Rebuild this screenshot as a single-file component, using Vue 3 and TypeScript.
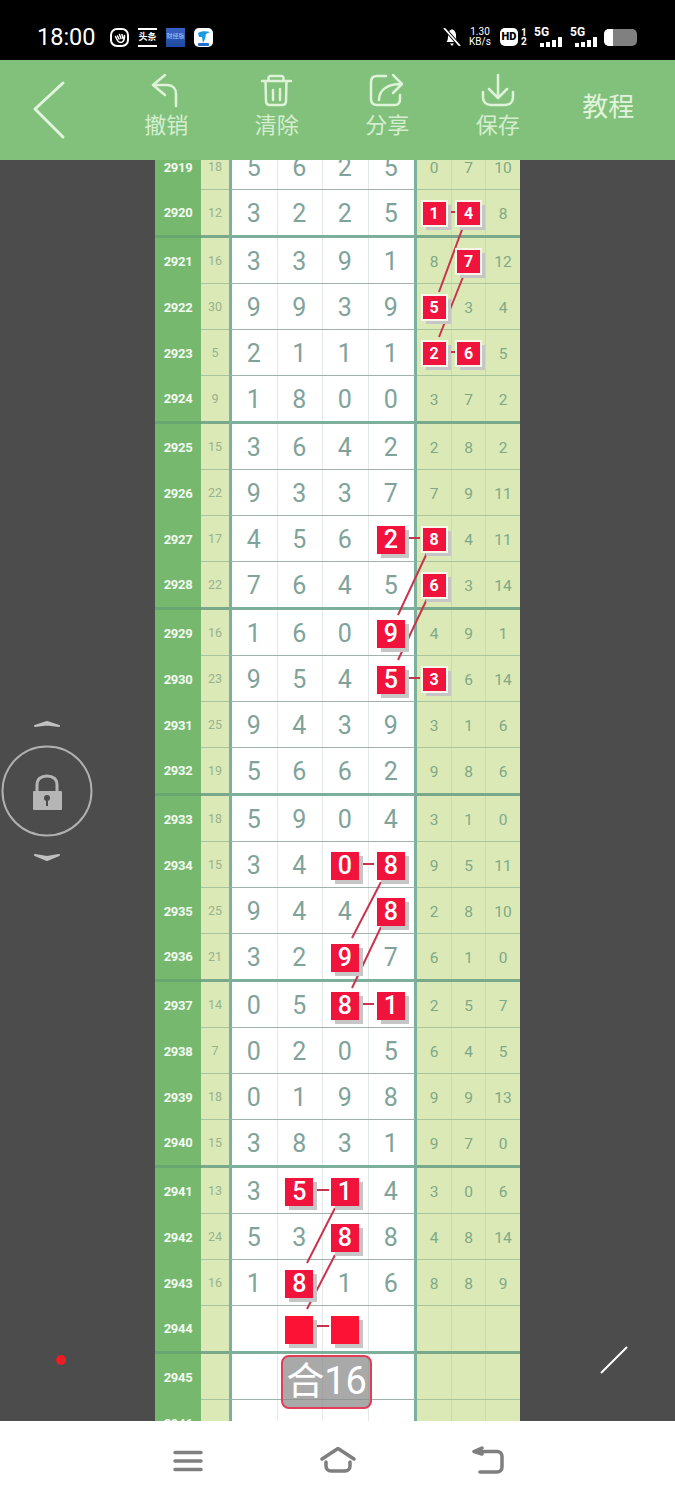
<template>
  <div class="page">
    <div class="status">
      <span class="status__time">18:00</span>
      <div class="status__apps">
        <svg class="app" viewBox="0 0 19 19">
          <rect x="1" y="1" width="17" height="17" rx="6" fill="#000" stroke="#fff" stroke-width="2" />
          <path d="M5.5 8.5l2 4c1 2 4 2.5 5.5 1s1.500-3.500 1.500-6M7.500 8l1.500 3M9.500 6.500l1.500 4M12 6.500l1 4" fill="none" stroke="#fff" stroke-width="1.500" stroke-linecap="round" />
        </svg>
        <div class="app app--news">头条</div>
        <div class="app app--blue">财经版</div>
        <svg class="app" viewBox="0 0 19 19">
          <rect width="19" height="19" rx="5" fill="#fff" />
          <path d="M4 5c3-2 8-2 12-1l-4 2-1 5-2 4-1-6-3 0z" fill="#1b9ce0" />
          <rect x="4" y="15" width="11" height="3" rx="1" fill="#1f6fd0" />
        </svg>
      </div>
      <div class="status__right">
        <svg class="bell" viewBox="0 0 18 18">
          <path d="M3.500 14c1.500-2 1.500-4 1.500-7s2-5.500 4-5.500S13 4 13 7s0 5 1.500 7zM7 15.500h4L9 18z" fill="#fff" />
          <path d="M1 0l16 18" stroke="#000" stroke-width="3.500" />
          <path d="M1 0l16 18" stroke="#fff" stroke-width="1.800" />
        </svg>
        <div class="speed"><span>1.30</span><span>KB/s</span></div>
        <div class="hd">HD</div>
        <div class="sim"><span>1</span><span>2</span></div>
        <div v-for="n in 2" :key="n" class="net">
          <span>5G</span>
          <svg viewBox="0 0 22 10" width="22" height="10">
            <rect x="0" y="6" width="4" height="4" fill="#fff" />
            <rect x="6" y="5" width="4" height="5" fill="#fff" />
            <rect x="12" y="3" width="4" height="7" fill="#fff" />
            <rect x="18" y="0" width="4" height="10" fill="#fff" />
          </svg>
        </div>
        <div class="battery"><div class="battery__fill"></div></div>
      </div>
    </div>

    <header class="bar">
      <svg class="bar__back" viewBox="0 0 40 70" width="40" height="70">
        <path d="M31 4L3 30l28 28" fill="none" stroke="#e0f5dc" stroke-width="3" stroke-linecap="round" stroke-linejoin="round" />
      </svg>
      <div class="bar__item">
        <svg viewBox="0 0 36 36" width="36" height="36">
          <path d="M17 2L5 12l12 10M5 12h14c6 0 9 4 9 9v12" class="bar__icon" />
        </svg>
        <span>撤销</span>
      </div>
      <div class="bar__item">
        <svg viewBox="0 0 36 36" width="36" height="36">
          <path d="M3 8h29M9.500 8V5c0-1 1-2 2-2h11c1 0 2 1 2 2v3M6.500 8l.5 20c0 3 2 4 4 4h12c2 0 4-1 4-4l.5-20M14 17v10M21 16v11" class="bar__icon" />
        </svg>
        <span>清除</span>
      </div>
      <div class="bar__item">
        <svg viewBox="0 0 36 36" width="36" height="36">
          <path d="M17 3H8C4 3 2 5 2 9v17c0 4 2 6 6 6h18c3 0 5-2 5-6v-4" class="bar__icon" />
          <path d="M10 27c0-9 7-16 22-16M24 2l9 9-9 9" class="bar__icon" />
        </svg>
        <span>分享</span>
      </div>
      <div class="bar__item">
        <svg viewBox="0 0 36 36" width="36" height="36">
          <path d="M18 2v23M9 16l9 9 9-9M3 19v5c0 5 3 8 8 8h14c5 0 8-3 8-8v-5" class="bar__icon" />
        </svg>
        <span>保存</span>
      </div>
      <div class="bar__item bar__item--text">教程</div>
    </header>

    <main class="board">
      <div class="chart">
        <div class="chart__rows">
          <div
            v-for="row in rows"
            :key="row.no"
            class="row"
            :class="{ 'row--end': row.end }"
          >
            <div class="row__no">{{ row.no }}</div>
            <div class="row__sum">{{ row.sum }}</div>
            <div class="row__digits">
              <div v-for="(d, i) in row.digits" :key="i" class="cell">
                <span v-if="d.hit" class="hit">{{ d.v }}</span>
                <span v-else>{{ d.v }}</span>
              </div>
            </div>
            <div class="row__side">
              <div v-for="(d, i) in row.side" :key="i" class="side">
                <span v-if="d.hit" class="hit hit--small">{{ d.v }}</span>
                <span v-else>{{ d.v }}</span>
              </div>
            </div>
          </div>
        </div>
        <svg class="chart__lines" viewBox="155 160 365 1261">
          <line
            v-for="(l, i) in lines"
            :key="i"
            :x1="l[0]"
            :y1="l[1]"
            :x2="l[2]"
            :y2="l[3]"
          />
        </svg>
        <div class="total">合16</div>
      </div>

      <div class="lock">
        <svg viewBox="0 0 94 150" width="94" height="150">
          <path d="M35 5l12-4 12 4-12-1.500z" fill="#c0c0c0" stroke="#c0c0c0" stroke-width="2" stroke-linejoin="round" />
          <circle cx="47" cy="70" r="44.500" fill="none" stroke="#b0b0b0" stroke-width="2" />
          <rect x="33" y="70" width="29" height="19" rx="1" fill="#b5b5b5" />
          <path d="M37 70v-6c0-6 4-9 10-9s10 3 10 9v6" fill="none" stroke="#b5b5b5" stroke-width="3" />
          <circle cx="47" cy="77" r="3" fill="#4c4c4c" />
          <rect x="46" y="78" width="2" height="7" fill="#4c4c4c" />
          <path d="M35 134l12 5 12-5-12 2z" fill="#c0c0c0" stroke="#c0c0c0" stroke-width="2" stroke-linejoin="round" />
        </svg>
      </div>
      <div class="dot"></div>
      <svg class="slash" viewBox="0 0 30 30" width="30" height="30">
        <line x1="2" y1="28" x2="28" y2="2" stroke="#fff" stroke-width="2" />
      </svg>
    </main>

    <nav class="nav">
      <svg viewBox="0 0 32 26" width="32" height="26">
        <path d="M3 4.500h26M3 13h26M3 21.500h26" class="nav__icon" />
      </svg>
      <svg viewBox="0 0 38 28" width="38" height="28">
        <path d="M3 12L19 1.500 35 12M7 15v4c0 3 2 5 5 5h14c3 0 5-2 5-5v-4" class="nav__icon" />
      </svg>
      <svg viewBox="0 0 32 30" width="32" height="30">
        <path d="M2 5.500h23c3 0 5 2 5 5V21c0 3-2 5-5 5H8M10 2L2 5.500 10 8" class="nav__icon" />
      </svg>
    </nav>
  </div>
</template>

<script setup lang="ts">
interface Digit {
  v: string;
  hit: boolean;
}

// "*" marks a number on a red square, "_" an empty red square
const raw = [
  "2919 18 5625 0,7,10",
  "2920 12 3225 1*,4*,8",
  "2921 16 3391 8,7*,12",
  "2922 30 9939 5*,3,4",
  "2923 5 2111 2*,6*,5",
  "2924 9 1800 3,7,2",
  "2925 15 3642 2,8,2",
  "2926 22 9337 7,9,11",
  "2927 17 4562* 8*,4,11",
  "2928 22 7645 6*,3,14",
  "2929 16 1609* 4,9,1",
  "2930 23 9545* 3*,6,14",
  "2931 25 9439 3,1,6",
  "2932 19 5662 9,8,6",
  "2933 18 5904 3,1,0",
  "2934 15 340*8* 9,5,11",
  "2935 25 9448* 2,8,10",
  "2936 21 329*7 6,1,0",
  "2937 14 058*1* 2,5,7",
  "2938 7 0205 6,4,5",
  "2939 18 0198 9,9,13",
  "2940 15 3831 9,7,0",
  "2941 13 35*1*4 3,0,6",
  "2942 24 538*8 4,8,14",
  "2943 16 18*16 8,8,9",
  "2944 - ._*_*. ,,",
  "2945 - .... ,,",
  "2946 - .... ,,",
];

function parseDigits(s: string): Digit[] {
  const out: Digit[] = [];
  for (const ch of s) {
    if (ch === "*") out[out.length - 1].hit = true;
    else out.push({ v: ch === "." || ch === "_" ? "" : ch, hit: false });
  }
  return out;
}

const rows = raw.map((line) => {
  const [no, sum, digits, side] = line.split(" ");
  return {
    no,
    sum: sum === "-" ? "" : sum,
    digits: parseDigits(digits),
    side: side.split(",").map((s) => ({
      v: s.replace("*", ""),
      hit: s.includes("*"),
    })),
    end: (Number(no) - 2920) % 4 === 0,
  };
});

// connector lines, in page coordinates
const lines = [
  [463, 227, 439, 292],
  [463, 277, 439, 337],
  [450, 212, 455, 212],
  [450, 352, 455, 352],
  [427, 553, 398, 615],
  [427, 599, 398, 660],
  [406, 538, 420, 538],
  [406, 678, 420, 678],
  [381, 882, 352, 938],
  [381, 927, 352, 988],
  [361, 864, 374, 864],
  [361, 1004, 374, 1004],
  [335, 1208, 307, 1263],
  [335, 1255, 307, 1309],
  [316, 1190, 329, 1190],
  [316, 1326, 329, 1326],
];
</script>

<style>
html,
body {
  margin: 0;
  background: #4c4c4c;
}
</style>

<style scoped>
.page {
  width: 675px;
  height: 1500px;
  display: flex;
  flex-direction: column;
  overflow: hidden;
  font-family: Roboto, "Noto Sans CJK SC", sans-serif;
}

.status {
  height: 60px;
  flex: none;
  background: #000;
  color: #fff;
  display: flex;
  align-items: center;
  padding: 14px 38px 0 37px;
  box-sizing: border-box;
}

.status__time {
  width: 58px;
  font-size: 23.500px;
  line-height: 24px;
  white-space: nowrap;
}

.status__apps {
  display: flex;
  gap: 9px;
  margin-left: 15px;
}

.app {
  width: 19px;
  height: 19px;
  display: block;
}

.app--news {
  background: #000;
  border-top: 2px solid #fff;
  border-bottom: 2px solid #fff;
  box-sizing: border-box;
  color: #fff;
  font-size: 9px;
  font-weight: 700;
  line-height: 15px;
  text-align: center;
  overflow: hidden;
}

.app--blue {
  background: linear-gradient(#3a62c4, #1f4a9c);
  color: #a8c8ff;
  font-size: 6px;
  line-height: 16px;
  text-align: center;
  overflow: hidden;
}

.status__right {
  margin-left: auto;
  display: flex;
  align-items: center;
}

.bell {
  width: 18px;
  height: 18px;
  margin-right: 8px;
}

.speed {
  display: flex;
  flex-direction: column;
  align-items: center;
  font-size: 10px;
  line-height: 10px;
  width: 22px;
  margin-right: 9px;
}

.hd {
  background: #fff;
  color: #000;
  border-radius: 5px;
  width: 18px;
  height: 18px;
  font-size: 11px;
  font-weight: 900;
  line-height: 18px;
  text-align: center;
  margin-right: 3px;
}

.sim {
  display: flex;
  flex-direction: column;
  width: 6px;
  font-size: 10px;
  font-weight: 700;
  line-height: 9.500px;
  margin-right: 7px;
}

.net {
  position: relative;
  width: 28px;
  height: 20px;
  margin-right: 8px;
  font-size: 12px;
  font-weight: 700;
  line-height: 11px;
}

.net svg {
  position: absolute;
  right: 0;
  bottom: 0;
}

.net + .net {
  margin-right: 7px;
  width: 27px;
}

.battery {
  width: 33px;
  height: 17px;
  border-radius: 5px;
  background: #808080;
  overflow: hidden;
}

.battery__fill {
  width: 9px;
  height: 100%;
  background: #fff;
}

.bar {
  height: 100px;
  flex: none;
  background: #82c17b;
  display: grid;
  grid-template-columns: 111px repeat(5, 1fr);
  padding-right: 11.500px;
  box-sizing: border-box;
}

.bar__back {
  margin: 19px 0 0 32px;
}

.bar__item {
  display: flex;
  flex-direction: column;
  align-items: center;
  padding-top: 13px;
  color: #d5eecf;
  font-size: 22px;
  line-height: 29px;
  font-family: "Noto Sans CJK SC", sans-serif;
}

.bar__item svg {
  display: block;
}

.bar__item--text {
  padding-top: 28px;
  font-size: 26px;
  line-height: 34px;
  color: #e0f3dc;
}

.bar__icon {
  fill: none;
  stroke: #def3d8;
  stroke-width: 2.500;
  stroke-linecap: round;
  stroke-linejoin: round;
}

.board {
  position: relative;
  flex: 1;
  min-height: 0;
  background: #4c4c4c;
  display: flex;
  justify-content: center;
}

.chart {
  position: relative;
  width: 365px;
  overflow: hidden;
}

.chart__rows {
  margin-top: -16px;
}

.row {
  display: flex;
  height: 46px;
}

.row--end {
  height: 48px;
}

.row__no {
  width: 46px;
  flex: none;
  box-sizing: border-box;
  background: #76b96e;
  color: #f4fbf2;
  font-size: 13px;
  font-weight: 700;
  line-height: 47px;
  text-align: center;
  letter-spacing: -0.300px;
}

.row--end .row__no {
  border-bottom: 3px solid #68a672;
  line-height: 45px;
}

.row__sum {
  width: 28px;
  flex: none;
  box-sizing: border-box;
  background: #dbe9b6;
  border-bottom: 1px solid #a8c49c;
  color: #98b28e;
  font-size: 12.500px;
  line-height: 46px;
  text-align: center;
}

.row--end .row__sum {
  line-height: 45px;
}

.row--end .row__sum,
.row--end .row__side {
  border-bottom: 3px solid #7aa88a;
}

.row__digits {
  width: 188px;
  flex: none;
  box-sizing: border-box;
  display: grid;
  grid-template-columns: repeat(4, 1fr);
  background: #fff;
  border-left: 3px solid #7cb09c;
  border-right: 3px solid #7cb09c;
  border-bottom: 1px solid #9fb2ad;
}

.row--end .row__digits {
  border-bottom: 3px solid #7cb09c;
}

.cell {
  display: flex;
  align-items: center;
  justify-content: center;
  box-sizing: border-box;
  padding: 2px 1px 0 0;
  color: #7fa39a;
  font-size: 25px;
  border-right: 1px solid #e2e9e6;
}

.cell:last-child {
  border-right: 0;
}

.row__side {
  flex: 1;
  box-sizing: border-box;
  display: grid;
  grid-template-columns: 35px 34px 34px;
  background: #dbe9b6;
  border-bottom: 1px solid #a8c49c;
}

.side {
  display: flex;
  align-items: center;
  justify-content: center;
  box-sizing: border-box;
  padding-top: 2px;
  color: #80a886;
  font-size: 15.500px;
  border-right: 1px solid #c9dcaa;
}

.side:last-child {
  border-right: 0;
}

.hit {
  width: 28px;
  height: 28px;
  background: #f0143c;
  color: #fff;
  font-weight: 500;
  line-height: 28px;
  text-align: center;
  box-shadow: 4px 4px 0 #c6c6c6;
  position: relative;
  z-index: 1;
}

.hit:empty {
  background: #fb1234;
}

.hit--small {
  width: 23px;
  height: 23px;
  font-size: 16px;
  font-weight: 700;
  line-height: 23px;
  box-shadow: 0 0 0 2px #f6f6ea, 4px 4px 0 1px #c6c6c6;
}

.chart__lines {
  position: absolute;
  top: 0;
  left: 0;
  width: 365px;
  height: 1261px;
  pointer-events: none;
}

.chart__lines line {
  stroke: #c8344c;
  stroke-width: 2;
}

.total {
  position: absolute;
  left: 126px;
  top: 1195px;
  width: 91px;
  height: 54px;
  box-sizing: border-box;
  background: rgba(140, 140, 140, 0.75);
  border: 2px solid #e23c58;
  border-radius: 8px;
  color: #fff;
  font-size: 38px;
  font-weight: 400;
  line-height: 48px;
  text-align: center;
  white-space: nowrap;
}

.lock {
  position: absolute;
  left: 0;
  top: 561px;
}

.dot {
  position: absolute;
  left: 56px;
  top: 1195px;
  width: 10px;
  height: 10px;
  border-radius: 50%;
  background: #ee1c25;
}

.slash {
  position: absolute;
  left: 599px;
  top: 1185px;
}

.nav {
  height: 79px;
  flex: none;
  background: #fff;
  display: grid;
  grid-template-columns: repeat(3, 150px);
  padding: 0 112.500px;
  align-items: center;
  justify-items: center;
}

.nav__icon {
  fill: none;
  stroke: #7f7f7f;
  stroke-width: 3.500;
  stroke-linecap: round;
  stroke-linejoin: round;
}
</style>
